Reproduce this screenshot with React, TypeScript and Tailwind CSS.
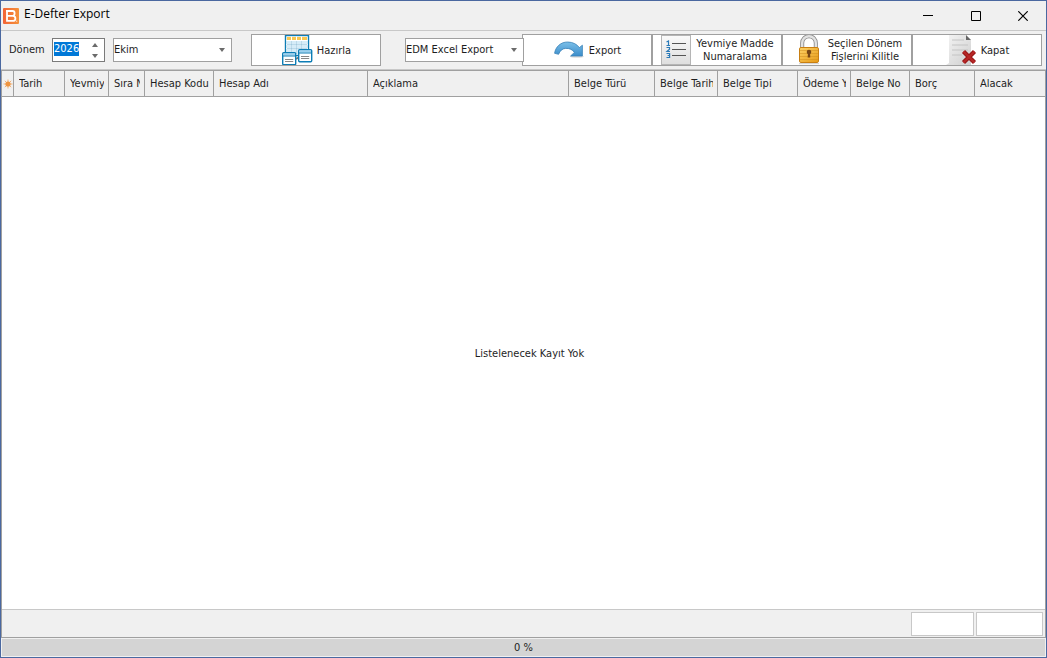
import { useEffect, useRef, useState } from "react";
import type { ReactNode } from "react";

type Column = { title: string; width: string };

const columns: Column[] = [
  { title: "Tarih", width: "w-[51px]" },
  { title: "Yevmiye No", width: "w-[44px]" },
  { title: "Sıra No", width: "w-[36px]" },
  { title: "Hesap Kodu", width: "w-[69px]" },
  { title: "Hesap Adı", width: "w-[154px]" },
  { title: "Açıklama", width: "w-auto" },
  { title: "Belge Türü", width: "w-[86px]" },
  { title: "Belge Tarihi", width: "w-[63px]" },
  { title: "Belge Tipi", width: "w-[80px]" },
  { title: "Ödeme Yöntemi", width: "w-[53px]" },
  { title: "Belge No", width: "w-[59px]" },
  { title: "Borç", width: "w-[65px]" },
  { title: "Alacak", width: "w-[70px]" },
];

const months = ["Ocak", "Şubat", "Mart", "Nisan", "Mayıs", "Haziran", "Temmuz", "Ağustos", "Eylül", "Ekim", "Kasım", "Aralık"];

function AppIcon() {
  return (
    <svg viewBox="0 0 16 16" className="size-4" aria-hidden="true">
      <defs>
        <linearGradient id="app" x1="0" x2="1" y1="0" y2="0">
          <stop offset="0" stopColor="#f26336" />
          <stop offset="1" stopColor="#f5923a" />
        </linearGradient>
      </defs>
      <rect width="16" height="16" rx="1" fill="url(#app)" />
      <path d="M3 3H9.6Q11.6 3 11.6 5.2Q11.6 7.6 9.8 7.8Q12.4 8 12.4 10.4Q12.4 12.9 9.8 12.9H4V7.8H9.8M4 3V7.8" fill="none" stroke="#fff" strokeWidth="1.8" />
      <circle cx="13.6" cy="13.3" r=".8" fill="#fbd0b0" />
    </svg>
  );
}

function TablesIcon() {
  return (
    <svg viewBox="0 0 32 32" className="size-8" aria-hidden="true">
      <rect x="4.5" y="1.5" width="23" height="20" fill="#fff" stroke="#0d7db5" strokeWidth="1.4" />
      <rect x="6" y="3" width="20" height="17.5" fill="#d5ecf8" />
      <rect x="6" y="3" width="20" height="3" fill="#f9c74e" />
      <path d="M10.5 2.6V21M15.5 2.6V21M20.5 2.6V21M5.4 6.5H26.6M5.4 10.5H26.6M5.4 14.5H26.6" stroke="#fff" />
      <path d="M6 10.5H26M6 14.5H26M10.5 7V20M15.5 7V20M20.5 7V20" stroke="#8fc0da" strokeWidth=".6" />
      <path d="M15 25L17.5 23.5" stroke="#777" strokeWidth="2" />
      <rect x="1.7" y="18.7" width="13" height="12" rx="1" fill="#fff" stroke="#0d7db5" strokeWidth="1.4" />
      <rect x="2.4" y="19.3" width="11.6" height="2.2" fill="#9bd0ee" />
      <path d="M1.7 22H14.7" stroke="#0d7db5" />
      <path d="M4 25.5H12.2M4 27.5H12.2" stroke="#888" />
      <rect x="17.7" y="15.7" width="13" height="12" rx="1" fill="#fff" stroke="#0d7db5" strokeWidth="1.4" />
      <rect x="18.4" y="16.3" width="11.6" height="2.2" fill="#9bd0ee" />
      <path d="M17.7 19H30.7" stroke="#0d7db5" />
      <path d="M20 22.5H28.2M20 24.5H28.2" stroke="#888" />
    </svg>
  );
}

function RedoIcon() {
  return (
    <svg viewBox="0 0 32 32" className="size-8" aria-hidden="true">
      <defs>
        <linearGradient id="redo" x1="0" x2="0" y1="0" y2="1">
          <stop offset="0" stopColor="#7bbfe8" />
          <stop offset="1" stopColor="#3b8dcb" />
        </linearGradient>
      </defs>
      <ellipse cx="24" cy="22.6" rx="7" ry="1.2" fill="#ddd" />
      <path d="M1.6 19.3C2.5 12.8 7.8 8 14.6 8C20 8 24 10.4 26.4 13.6L29.4 11.2V22H17.6L21.4 18.4C19.4 15.4 16.6 14.3 12.6 14.4C9.4 14.6 7 16.6 5.6 20.3Z" fill="url(#redo)" stroke="#3a82b8" strokeWidth=".8" strokeLinejoin="round" />
    </svg>
  );
}

function NumberedListIcon() {
  return (
    <svg viewBox="0 0 32 32" className="size-8" aria-hidden="true">
      <defs>
        <linearGradient id="list" x1="0" x2="0" y1="0" y2="1">
          <stop offset="0" stopColor="#fafafa" />
          <stop offset="1" stopColor="#dedede" />
        </linearGradient>
      </defs>
      <rect x="1.5" y="1.5" width="29" height="29" fill="url(#list)" stroke="#b5b5b5" />
      <path d="M12 9.5H26M12 15.5H26M12 21.5H26" stroke="#555" />
      <path d="M6.5 8L8.5 7V11.5M6.5 11.5H10" fill="none" stroke="#2a7ab8" strokeWidth="1.2" />
      <path d="M6.5 13.5H9.5V15.3L7 17.5H10" fill="none" stroke="#2a7ab8" strokeWidth="1.2" />
      <path d="M6.5 19.5H9.6V23.5H6.5M7.6 21.5H9.6" fill="none" stroke="#2a7ab8" strokeWidth="1.2" />
    </svg>
  );
}

function LockIcon() {
  return (
    <svg viewBox="0 0 32 32" className="size-8" aria-hidden="true">
      <defs>
        <linearGradient id="lock" x1="0" x2="1" y1="0" y2="1">
          <stop offset="0" stopColor="#fcd267" />
          <stop offset="1" stopColor="#e79a16" />
        </linearGradient>
      </defs>
      <path d="M10.2 16V9A6.8 6.8 0 0 1 23.8 9V16" fill="none" stroke="#858585" strokeWidth="4" />
      <path d="M10.2 16V9A6.8 6.8 0 0 1 23.8 9V16" fill="none" stroke="#e2e2e2" strokeWidth="2.4" />
      <rect x="7.5" y="13.5" width="19" height="15" rx="1.4" fill="url(#lock)" stroke="#c87f13" />
      <path d="M8 16.5H26M8 19.5H26M8 22.5H26M8 25.5H26" stroke="#cd8a1c" strokeWidth=".9" opacity=".5" />
      <circle cx="17" cy="18" r="2.3" fill="#764615" />
      <path d="M16 18H18L18.3 23.5H15.7Z" fill="#764615" />
      <path d="M7 29.7H27" stroke="#ccc" />
    </svg>
  );
}

function ClosePageIcon() {
  return (
    <svg viewBox="0 0 32 32" className="size-8" aria-hidden="true">
      <defs>
        <linearGradient id="page" x1="0" x2="1" y1="0" y2="1">
          <stop offset="0" stopColor="#f4f4f4" />
          <stop offset="1" stopColor="#cfcfcf" />
        </linearGradient>
      </defs>
      <path d="M1 31L4 29V1H21L26 6V31Z" fill="url(#page)" />
      <path d="M21 1L26 6H21Z" fill="#666" />
      <path d="M7 6H19M7 11H23M7 16H23M7 21H17" stroke="#c4c4c4" />
      <path d="M18.5 17.5L29.5 28.5M29.5 17.5L18.5 28.5" stroke="#991818" strokeWidth="4.4" />
      <path d="M18.5 17.5L29.5 28.5M29.5 17.5L18.5 28.5" stroke="#b82727" strokeWidth="2" />
    </svg>
  );
}

function Arrow({ up = false }: { up?: boolean }) {
  return (
    <svg viewBox="0 0 6 4" className="h-1 w-1.5" aria-hidden="true">
      <path d={up ? "M0 4L3 0L6 4Z" : "M0 0H6L3 4Z"} fill="#6b6b6b" />
    </svg>
  );
}

function Combo({ label, options, initial }: { label: string; options: string[]; initial: string }) {
  return (
    <div className="relative z-10 flex h-6 w-[119px] items-center border border-[#a0a0a0] bg-white">
      <select aria-label={label} defaultValue={initial} className="h-full w-full appearance-none bg-transparent outline-none">
        {options.map((o) => (
          <option key={o}>{o}</option>
        ))}
      </select>
      <span className="pointer-events-none absolute right-1.5">
        <Arrow />
      </span>
    </div>
  );
}

function ToolButton({ icon, children }: { icon: ReactNode; children: ReactNode }) {
  return (
    <button className="flex h-8 w-[130px] items-center justify-center gap-1 overflow-hidden border border-[#a0a0a0] bg-white leading-[13px] hover:bg-[#e5f1fb]">
      <span className="shrink-0">{icon}</span>
      <span className="text-center">{children}</span>
    </button>
  );
}

export default function App() {
  const [year, setYear] = useState(2026);
  const yearRef = useRef<HTMLInputElement>(null);

  useEffect(() => {
    yearRef.current?.focus();
    yearRef.current?.select();
  }, []);

  return (
    <div className="flex min-h-screen flex-col border border-[#4a68a0] bg-[#f0f0f0] font-['DejaVu_Sans_Condensed','Noto_Sans',sans-serif] text-[11px] text-[#1e1e1e]">
      <header className="flex h-[29px] shrink-0 items-center pl-0.5">
        <AppIcon />
        <h1 className="flex-1 pb-1 pl-[5px] font-['Open_Sans',sans-serif] text-[12px] text-black">E-Defter Export</h1>
        <div className="flex h-full">
          <button aria-label="Simge durumuna küçült" className="flex h-full w-12 items-center justify-center">
            <svg viewBox="0 0 10 10" className="size-2.5"><path d="M0 4.5H10" stroke="#000" /></svg>
          </button>
          <button aria-label="Ekranı kapla" className="flex h-full w-12 items-center justify-center">
            <svg viewBox="0 0 10 10" className="size-2.5"><path d="M.5 .5H9.5V9.5H.5Z" fill="none" stroke="#000" /></svg>
          </button>
          <button aria-label="Pencereyi kapat" className="flex h-full w-[46px] items-center justify-center">
            <svg viewBox="0 0 10 10" className="size-2.5"><path d="M.3 .3L9.7 9.7M9.7 .3L.3 9.7" stroke="#000" strokeWidth="1.2" /></svg>
          </button>
        </div>
      </header>

      <div className="flex h-10 shrink-0 items-center border-y border-[#c8c8c8] pr-1 pl-2">
        <label htmlFor="year" className="w-[43px]">Dönem</label>
        <div className="flex h-6 w-[53px] items-center border border-[#7a7a7a] bg-white">
          <input
            id="year"
            ref={yearRef}
            value={year}
            onChange={(e) => setYear(Number(e.target.value) || 0)}
            className="w-0 flex-1 pb-0.5 pl-px leading-[14px] caret-transparent outline-none selection:bg-[#0078d7] selection:text-white"
          />
          <div className="flex h-full w-[18px] flex-col">
            <button aria-label="Artır" onClick={() => setYear(year + 1)} className="flex flex-1 items-center justify-center">
              <Arrow up />
            </button>
            <button aria-label="Azalt" onClick={() => setYear(year - 1)} className="flex flex-1 items-center justify-center">
              <Arrow />
            </button>
          </div>
        </div>
        <div className="ml-2">
          <Combo label="Ay" options={months} initial="Ekim" />
        </div>
        <div className="ml-[19px]">
          <ToolButton icon={<TablesIcon />}>Hazırla</ToolButton>
        </div>
        <div className="ml-6 flex items-center">
          <Combo label="Export biçimi" options={["EDM Excel Export"]} initial="EDM Excel Export" />
          <div className="-ml-0.5 flex">
            <ToolButton icon={<RedoIcon />}>Export</ToolButton>
            <ToolButton icon={<NumberedListIcon />}>Yevmiye Madde<br />Numaralama</ToolButton>
            <ToolButton icon={<LockIcon />}>Seçilen Dönem<br />Fişlerini Kilitle</ToolButton>
            <ToolButton icon={<ClosePageIcon />}>Kapat</ToolButton>
          </div>
        </div>
      </div>

      <main className="flex flex-1 flex-col border border-[#a0a0a0] bg-white">
        <table className="w-full table-fixed border-separate border-spacing-0 bg-[#f0f0f0]">
          <thead>
            <tr className="h-[26px]">
              <th aria-label="Satır göstergesi" className="w-3 border-r border-b border-[#a0a0a0] p-0">
                <svg viewBox="0 0 10 10" className="mx-auto size-2.5" aria-hidden="true">
                  <path d="M5 .5V9.5M.5 5H9.5M1.8 1.8L8.2 8.2M8.2 1.8L1.8 8.2" stroke="#f2b277" />
                  <circle cx="5" cy="5" r="2.6" fill="#ee9440" />
                </svg>
              </th>
              {columns.map((c) => (
                <th key={c.title} className={`${c.width} border-r border-b border-[#a0a0a0] pt-0.5 pr-1 pb-0 pl-[5px] text-left font-normal last:border-r-0`}>
                  <div className="overflow-hidden whitespace-nowrap">{c.title}</div>
                </th>
              ))}
            </tr>
          </thead>
        </table>
        <p className="flex flex-1 items-center justify-center pt-0.5 pl-3">Listelenecek Kayıt Yok</p>
        <div className="flex h-7 shrink-0 items-center justify-end gap-0.5 border-t border-[#c8c8c8] bg-[#f0f0f0] pr-0.5">
          <output aria-label="Borç toplamı" className="h-6 w-[63px] border border-[#c8c8c8] bg-white" />
          <output aria-label="Alacak toplamı" className="h-6 w-[67px] border border-[#c8c8c8] bg-white" />
        </div>
      </main>

      <div role="progressbar" aria-label="İlerleme" aria-valuenow={0} aria-valuemin={0} aria-valuemax={100} className="mx-px mt-px mb-px flex h-[17px] shrink-0 items-center justify-center bg-[#d4d4d4] pt-0.5">
        0 %
      </div>
    </div>
  );
}
